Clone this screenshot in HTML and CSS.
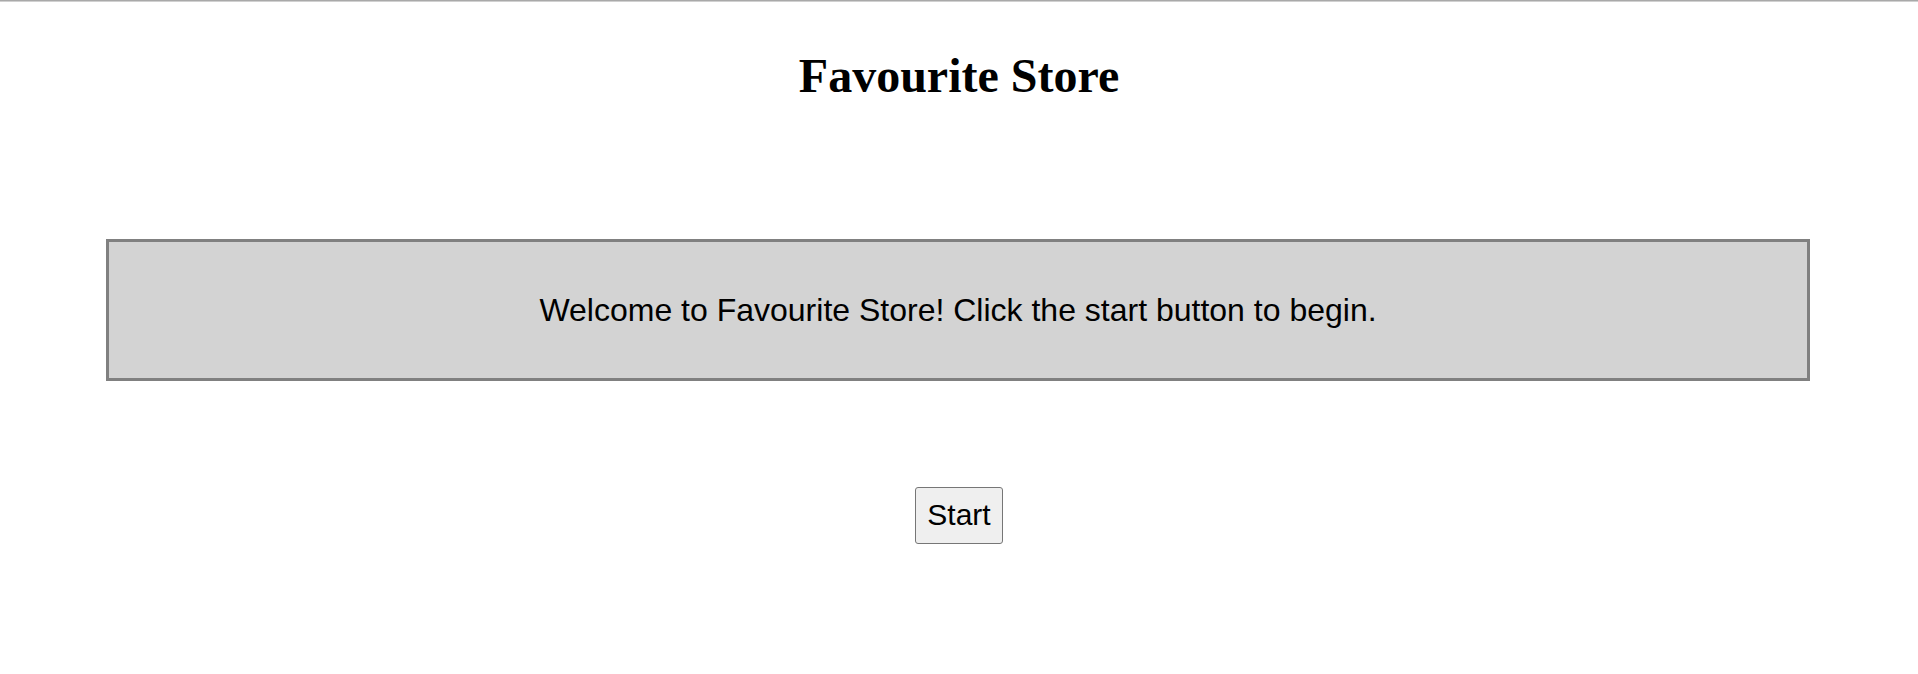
FILE: index.html
```html
<!DOCTYPE html>
<html lang="en">
<head>
<meta charset="utf-8">
<title>Favourite Store</title>
<link rel="stylesheet" href="styles.css">
</head>
<body>
<div class="topline"></div>
<main class="page">
  <h1 class="title">Favourite Store</h1>
  <div class="message">Welcome to Favourite Store! Click the start button to begin.</div>
  <button class="start-btn" type="button">Start</button>
</main>
</body>
</html>
```
FILE: styles.css
```css
html, body {
  margin: 0;
  padding: 0;
  background: #ffffff;
}
body {
  font-family: "Liberation Sans", Arial, sans-serif;
  color: #000000;
}
.topline {
  height: 1px;
  background: #a9a9a9;
  border-bottom: 1px solid #d0d0d0;
}
.page {
  display: flex;
  flex-direction: column;
  align-items: center;
}
.title {
  margin: 46px 0 0 0;
  font-family: "Liberation Serif", "Times New Roman", serif;
  font-weight: bold;
  font-size: 48px;
  line-height: 56px;
}
.message {
  box-sizing: border-box;
  width: 1704px;
  margin: 135px 2px 0 0;
  padding: 51px 10px;
  background: #d3d3d3;
  border: 3px solid #808080;
  font-size: 32px;
  line-height: 34px;
  text-align: center;
}
.start-btn {
  margin-top: 106px;
  padding: 10px 11px 11px;
  font-family: "Liberation Sans", Arial, sans-serif;
  font-size: 30px;
  line-height: 34px;
  color: #000000;
  background: #efefef;
  border: 1px solid #767676;
  border-radius: 3px;
}
```
